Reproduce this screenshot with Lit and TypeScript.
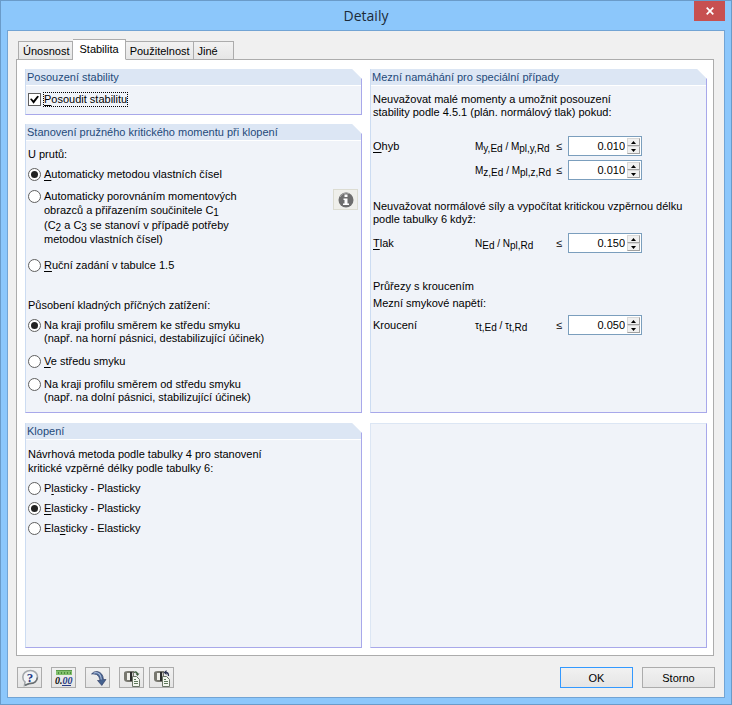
import { LitElement, html, css, svg, nothing, TemplateResult } from "lit";
import { customElement, property, state } from "lit/decorators.js";
import { classMap } from "lit/directives/class-map.js";

const base = css`
  * { box-sizing: border-box; }
  button, input { font: inherit; color: inherit; margin: 0; }
  u { text-decoration: underline; text-underline-offset: 2px; text-decoration-thickness: 1px; text-decoration-skip-ink: none; }
  sub { font-size: 10px; line-height: 0; vertical-align: -2px; }
`;

@customElement("group-box")
class GroupBox extends LitElement {
  @property() heading = "";
  static styles = [base, css`
    :host { display: block; }
    .box {
      height: 100%;
      background: #f0f3f9;
      border: 1px solid #a8a8ea;
      border-top: 0;
      border-left-color: #ccdcf2;
    }
    .titled { clip-path: polygon(0 0, calc(100% - 10px) 0, 100% 10px, 100% 100%, 0 100%); }
    .plain { border-top: 1px solid #dce6f4; border-left-color: #dce6f4; }
    h2 {
      margin: 0;
      height: 17px;
      padding-left: 1px;
      line-height: 16px;
      font-size: 11px;
      font-weight: 400;
      color: #1f4a7a;
      background: #dce6f4;
      border-bottom: 1px solid #fff;
    }
    .body { padding: 7px 3px 8px 2px; }
  `];
  render() {
    return html`<section class="box ${this.heading ? "titled" : "plain"}">
      ${this.heading ? html`<h2>${this.heading}</h2>` : nothing}
      <div class="body"><slot></slot></div>
    </section>`;
  }
}

@customElement("spin-box")
class SpinBox extends LitElement {
  @property({ type: Number }) value = 0;
  @property() label = "";
  static styles = [base, css`
    :host { display: block; }
    .spin {
      display: flex;
      height: 20px;
      padding: 1px;
      background: #fff;
      border: 1px solid #7b9ebd;
    }
    input {
      flex: 1;
      min-width: 0;
      padding: 0 2px 0 0;
      border: 0;
      outline: 0;
      background: none;
      text-align: right;
      font-size: 11px;
    }
    .arrows { display: flex; flex-direction: column; width: 13px; }
    button {
      flex: 1;
      display: flex;
      align-items: center;
      justify-content: center;
      min-height: 0;
      padding: 0;
      background: #f0f0f0;
      border: 1px solid #d8d8d8;
      border-right-color: #a0a0a0;
      border-bottom-color: #a0a0a0;
    }
    svg { display: block; width: 5px; height: 3px; }
  `];
  private step(d: number) { this.value = Math.max(0, this.value + d); }
  render() {
    return html`<div class="spin">
      <input type="text" aria-label=${this.label} .value=${this.value.toFixed(3)}>
      <div class="arrows">
        <button aria-label="+" @click=${() => this.step(0.001)}><svg viewBox="0 0 5 3"><path d="M0 3L2.5 0L5 3z"/></svg></button>
        <button aria-label="-" @click=${() => this.step(-0.001)}><svg viewBox="0 0 5 3"><path d="M0 0L2.5 3L5 0z"/></svg></button>
      </div>
    </div>`;
  }
}

const clipboardBase = svg`
  <path d="M1 4Q1 2 5 2H11V13H5Q1 13 1 10z" fill="#77776f"/>
  <path d="M4 4H7V11H4z" fill="#efefea"/>
  <path d="M7 3H9V12H7z" fill="#2c2c2c"/>
  <path d="M9 4H10V11H9z" fill="#c9c9c4"/>`;
const page = svg`
  <path d="M9.500 7.500H13.500L16.500 10.500V17.500H9.500z" fill="#f4f8f0" stroke="#6a7566"/>
  <path d="M11 10.500H13M11 12.500H15M11 14.500H15" stroke="#5f7a5c"/>`;

const icons: { name: string; art: TemplateResult }[] = [
  {
    name: "Nápověda",
    art: html`<svg viewBox="0 0 18 18">
      <path d="M9.500 1.500C13.500 1.500 16.500 4.400 16.500 8S13.500 14.500 9.500 14.500L8 14.500L3.500 16.500L4 13C2.300 11.800 1.800 10 1.800 8C1.800 4.400 5 1.500 9.500 1.500z" fill="#f2f4f6" stroke="#a3a7ab" stroke-width="1.600"/>
      <path d="M4 16.200L8.500 14.600C12.800 14.800 16 12.300 16.300 8.500" fill="none" stroke="#676d70" stroke-width="1.500"/>
      <text x="9" y="12.500" text-anchor="middle" font-family="Liberation Serif, serif" font-weight="700" font-size="13" fill="#263a86">?</text>
    </svg>`,
  },
  {
    name: "Jednotky a desetinná místa",
    art: html`<svg viewBox="0 0 18 18">
      <rect x="1" y="1" width="16" height="5" fill="#82c06c"/>
      <path d="M1 1.500H17" stroke="#5a9a4a"/>
      <path d="M3.500 3V5M6.500 3V5M9.500 3V5M12.500 3V5M15.500 3V5" stroke="#4b8a3d"/>
      <text x="0" y="15" font-family="Liberation Serif, serif" font-style="italic" font-weight="700" font-size="10" fill="#111">0.<tspan fill="#263a86">00</tspan></text>
      <path d="M7 16.500H16" stroke="#263a86"/>
    </svg>`,
  },
  {
    name: "Standardní nastavení",
    art: html`<svg viewBox="0 0 18 18">
      <path d="M2.500 5Q4.500 2 8.500 2.500Q14 3.800 14.500 10.500H17L12.800 16.500L8.500 11.500H11Q10.500 7 7.500 5.500Q5 4.600 2.500 5z" fill="#44618f" stroke="#26335c" stroke-width=".6"/>
      <path d="M4.500 4.200Q8 2.900 10.500 5.200Q12 7 12.300 10.500" fill="none" stroke="#a9bbda" stroke-width="1.200"/>
    </svg>`,
  },
  {
    name: "Uložit jako standardní",
    art: html`<svg viewBox="0 0 18 18">${clipboardBase}
      <path d="M11 3.500Q13.500 2 14.500 5" fill="none" stroke="#3a5a3a" stroke-width="1.300"/><path d="M12.500 4.500H16.500L14.500 7z" fill="#3a5a3a"/>${page}
    </svg>`,
  },
  {
    name: "Načíst standardní",
    art: html`<svg viewBox="0 0 18 18">${clipboardBase}
      <path d="M13 3.500Q15.500 3.500 15.500 7" fill="none" stroke="#2c3350" stroke-width="1.300"/><path d="M13.500 1V6L10.500 3.500z" fill="#2c3350"/>${page}
    </svg>`,
  },
];

@customElement("app-root")
class AppRoot extends LitElement {
  @state() private tab = 1;

  static styles = [base, css`
    :host {
      display: block;
      font-family: "Liberation Sans", Arial, sans-serif;
      font-size: 11px;
      line-height: 13px;
      color: #000;
    }
    .window {
      display: flex;
      flex-direction: column;
      min-height: 100vh;
      padding: 0 6px 6px;
      background: #8cc7fb;
      border: 1px solid #6a9bc9;
    }
    .title { display: grid; grid-template-columns: 1fr auto 1fr; height: 29px; }
    h1 {
      grid-column: 2;
      margin: 0;
      font: 400 14px/29px "Open Sans", "Noto Sans", sans-serif;
      color: #1c2b38;
    }
    .close {
      justify-self: end;
      display: grid;
      place-items: center;
      width: 31px;
      height: 20px;
      padding: 0;
      border: 0;
      background: #c75050;
    }
    .close svg { width: 8px; height: 8px; }
    .client {
      flex: 1;
      display: flex;
      flex-direction: column;
      padding: 8px 9px 9px 8px;
      background: #f0f0f0;
      border: 1px solid #72a4d4;
    }
    .tabs { display: flex; align-items: flex-end; padding-left: 2px; margin-bottom: -1px; z-index: 1; }
    .tab {
      height: 19px;
      padding: 1px 3px 0 4px;
      border: 1px solid #acacac;
      border-left-width: 0;
      background: linear-gradient(#f2f2f2, #e6e6e6);
      line-height: 16px;
      white-space: nowrap;
    }
    .tab:first-child { border-left-width: 1px; }
    .tab:last-child { padding-right: 15px; }
    .tab.active { height: 21px; padding: 0 6px 1px; background: #fff; border-bottom-color: #fff; }
    .sheet {
      flex: 1;
      display: grid;
      grid-template-columns: 1fr 1fr;
      grid-template-rows: auto 1fr;
      gap: 10px 8px;
      margin-right: 1px;
      padding: 9px 6px 7px 8px;
      background: #fff;
      border: 1px solid #acacac;
    }
    .stack { display: flex; flex-direction: column; gap: 9px; }
    p { margin: 0; }
    .option { display: flex; align-items: flex-start; gap: 3px; }
    .option.near { margin-top: 7px; }
    .option.gap { margin-top: 9px; }
    .option.wide { margin-top: 10px; }
    .option.far { margin-top: 13px; }
    .lead { margin-top: 27px; }
    .tall { display: inline-block; line-height: 15px; }
    .loose { line-height: 14px; }
    .split { display: flex; justify-content: space-between; align-items: flex-start; }
    input[type="radio"], input[type="checkbox"] {
      appearance: none;
      flex: none;
      display: grid;
      place-items: center;
      width: 13px;
      height: 13px;
      background: #fff;
      border: 1px solid #5f5f5f;
      outline: 0;
    }
    input[type="radio"] { border-radius: 50%; }
    input[type="radio"]:checked::before { content: ""; width: 7px; height: 7px; border-radius: 50%; background: #222; }
    input[type="checkbox"]:checked::before {
      content: "";
      width: 9px;
      height: 9px;
      background: #000;
      clip-path: polygon(0 45%, 18% 38%, 38% 62%, 82% 8%, 100% 16%, 40% 96%);
    }
    .focused { outline: 1px dotted #000; }
    .info { display: grid; place-items: center; width: 25px; height: 21px; padding: 0; margin-top: 8px; background: #efefeb; border: 1px solid #dcdcd2; }
    .info svg { width: 16px; height: 16px; }
    .limit { display: grid; grid-template-columns: 102px 81px 12px 74px; align-items: center; }
    .limit + .limit { margin-top: 4px; }
    .formula { font-size: 10px; white-space: nowrap; }
    .first { margin-top: 17px; }
    .second { margin-top: 20px; }
    .third { margin-top: 27px; }
    .after { margin-top: 7px; }
    .close-by { margin: 4px 0 5px; }
    .footer { display: flex; align-items: center; gap: 9px; margin-top: 11px; padding-left: 1px; }
    .pair { display: flex; gap: 5px; }
    .tool, .push {
      height: 21px;
      border: 1px solid #acacac;
      background: linear-gradient(#f1f1f1, #e5e5e5);
    }
    .tool { display: grid; place-items: center; width: 25px; padding: 0; }
    .tool svg { width: 18px; height: 18px; }
    .push { width: 73px; padding: 2px 0 0; }
    .push.default { margin-left: auto; border-color: #3399ff; }
  `];

  private radio(name: string, id: string, text: unknown, checked: boolean, space: string) {
    return html`<div class="option ${space}">
      <input type="radio" name=${name} id=${id} ?checked=${checked}><label for=${id}>${text}</label>
    </div>`;
  }

  private limit(label: unknown, formula: unknown, value: number, name: string, space = "") {
    return html`<div class="limit ${space}">
      <span>${label}</span><span class="formula">${formula}</span><span>≤</span>
      <spin-box .value=${value} label=${name}></spin-box>
    </div>`;
  }

  private tool(i: { name: string; art: TemplateResult }) {
    return html`<button class="tool" aria-label=${i.name}>${i.art}</button>`;
  }

  render() {
    const tabs = ["Únosnost", "Stabilita", "Použitelnost", "Jiné"];
    return html`<main class="window">
      <header class="title">
        <h1>Detaily</h1>
        <button class="close" aria-label="Zavřít"><svg viewBox="0 0 8 8"><path d="M.7 .7L7.300 7.300M7.300 .7L.7 7.300" stroke="#fff" stroke-width="1.700"/></svg></button>
      </header>
      <div class="client">
        <div class="tabs" role="tablist">
          ${tabs.map((t, i) => html`<button role="tab" aria-selected=${i === this.tab}
            class=${classMap({ tab: true, active: i === this.tab })} @click=${() => (this.tab = i)}>${t}</button>`)}
        </div>
        <div class="sheet" role="tabpanel">
          <div class="stack">
            <group-box heading="Posouzení stability">
              <div class="option">
                <input type="checkbox" id="check" checked><label for="check" class="focused"><u>P</u>osoudit stabilitu</label>
              </div>
            </group-box>
            <group-box heading="Stanovení pružného kritického momentu při klopení">
              <p>U prutů:</p>
              ${this.radio("method", "m1", html`<u>A</u>utomaticky metodou vlastních čísel`, true, "near")}
              <div class="split">
                ${this.radio("method", "m2", html`Automaticky porovnáním momentových<br>
                  <span class="tall">obrazců a přiřazením součinitele C<sub>1</sub></span><br>
                  <span class="tall">(C<sub>2</sub> a C<sub>3</sub> se stanoví v případě potřeby</span><br>
                  metodou vlastních čísel)`, false, "gap")}
                <button class="info" aria-label="Informace"><svg viewBox="0 0 16 16">
                  <circle cx="8" cy="8" r="7.500" fill="#6e6e6e"/><path d="M2 5A7 7 0 0 1 11 1.500" fill="none" stroke="#aaa"/>
                  <path d="M6.500 2.500H9.500V5H6.500zM5.500 6.500H9.500V11.500H11V13H5V11.500H6.500V8H5.500z" fill="#fff"/>
                </svg></button>
              </div>
              ${this.radio("method", "m3", html`<u>R</u>uční zadání v tabulce 1.5`, false, "far")}
              <p class="lead">Působení kladných příčných zatížení:</p>
              ${this.radio("load", "l1", html`Na kraji profilu směrem ke středu smyku<br>(např. na horní pásnici, destabilizující účinek)`, true, "near")}
              ${this.radio("load", "l2", html`<u>V</u>e středu smyku`, false, "wide")}
              ${this.radio("load", "l3", html`Na kraji profilu směrem od středu smyku<br>(např. na dolní pásnici, stabilizující účinek)`, false, "wide")}
            </group-box>
          </div>
          <group-box heading="Mezní namáhání pro speciální případy">
            <p>Neuvažovat malé momenty a umožnit posouzení<br>stability podle 4.5.1 (plán. normálový tlak) pokud:</p>
            ${this.limit(html`<u>O</u>hyb`, html`M<sub>y,Ed</sub> / M<sub>pl,y,Rd</sub>`, 0.01, "Ohyb y", "first")}
            ${this.limit("", html`M<sub>z,Ed</sub> / M<sub>pl,z,Rd</sub>`, 0.01, "Ohyb z")}
            <p class="second">Neuvažovat normálové síly a vypočítat kritickou vzpěrnou délku<br>podle tabulky 6 když:</p>
            ${this.limit(html`<u>T</u>lak`, html`N<sub>Ed</sub> / N<sub>pl,Rd</sub>`, 0.15, "Tlak", "after")}
            <p class="third">Průřezy s kroucením</p>
            <p class="close-by">Mezní smykové napětí:</p>
            ${this.limit("Kroucení", html`τ<sub>t,Ed</sub> / τ<sub>t,Rd</sub>`, 0.05, "Kroucení")}
          </group-box>
          <group-box heading="Klopení">
            <p class="loose">Návrhová metoda podle tabulky 4 pro stanovení<br>kritické vzpěrné délky podle tabulky 6:</p>
            ${this.radio("ltb", "k1", html`P<u>l</u>asticky - Plasticky`, false, "near")}
            ${this.radio("ltb", "k2", html`<u>E</u>lasticky - Plasticky`, true, "near")}
            ${this.radio("ltb", "k3", html`Ela<u>s</u>ticky - Elasticky`, false, "near")}
          </group-box>
          <group-box></group-box>
        </div>
        <footer class="footer">
          ${icons.slice(0, 3).map((i) => this.tool(i))}
          <div class="pair">${icons.slice(3).map((i) => this.tool(i))}</div>
          <button class="push default">OK</button>
          <button class="push">Storno</button>
        </footer>
      </div>
    </main>`;
  }
}
